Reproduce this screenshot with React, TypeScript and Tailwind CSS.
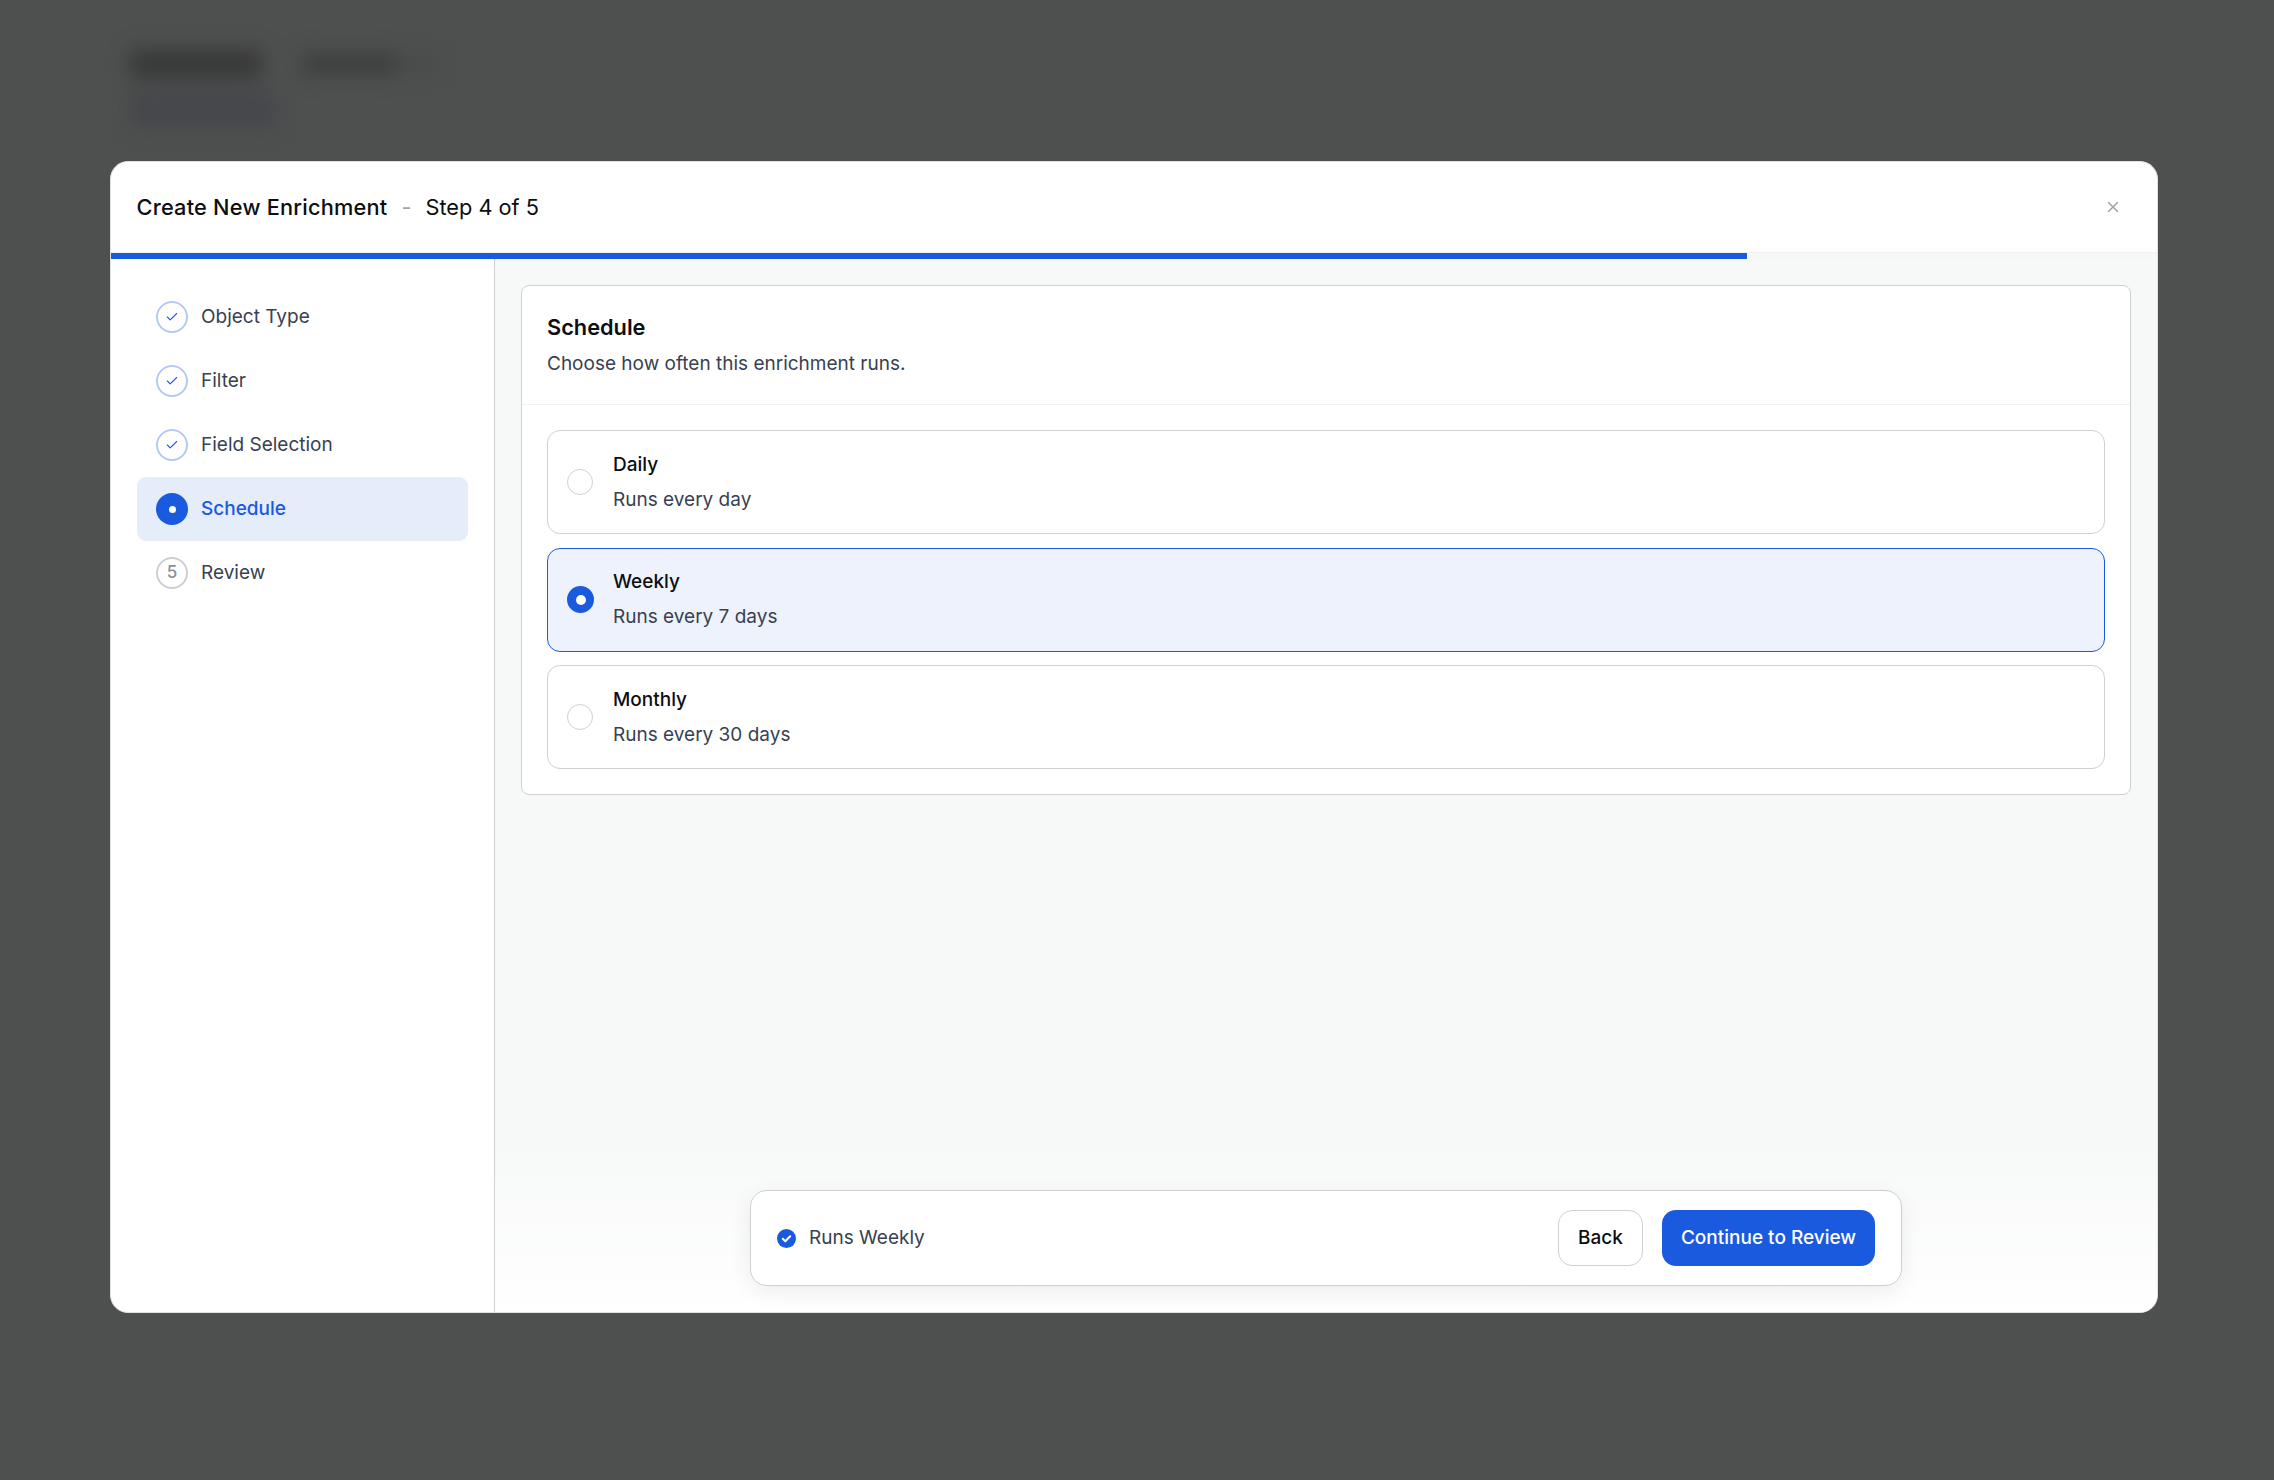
import { Check, X } from 'lucide-react';

const steps = [
  { label: 'Object Type', state: 'done' },
  { label: 'Filter', state: 'done' },
  { label: 'Field Selection', state: 'done' },
  { label: 'Schedule', state: 'active' },
  { label: 'Review', state: 'todo' },
];

const options = [
  { title: 'Daily', desc: 'Runs every day', selected: false },
  { title: 'Weekly', desc: 'Runs every 7 days', selected: true },
  { title: 'Monthly', desc: 'Runs every 30 days', selected: false },
];

function StepIcon({ state }: { state: string }) {
  if (state === 'done') {
    return (
      <span className="flex h-8 w-8 items-center justify-center rounded-full border-2 border-[#b4cbf5] bg-white">
        <Check size={14} strokeWidth={1.9} className="text-[#1a5adf]" />
      </span>
    );
  }
  if (state === 'active') {
    return (
      <span className="flex h-8 w-8 items-center justify-center rounded-full bg-[#1a5adf]">
        <span className="h-[7px] w-[7px] rounded-full bg-white" />
      </span>
    );
  }
  return (
    <span className="flex h-8 w-8 items-center justify-center rounded-full border-2 border-[#cdcfd2] bg-white text-[17px] font-medium text-[#8b9097]">
      5
    </span>
  );
}

export default function App() {
  return (
    <div className="relative h-screen w-screen overflow-hidden bg-[#4e504f] font-['Inter',sans-serif]">
      {/* page behind the dialog, blurred */}
      <div className="flex flex-col gap-[14px] pl-[130px] pt-[50px] blur-[10px]">
        <div className="flex items-center gap-[40px]">
          <div className="h-[28px] w-[132px] bg-[#373837]" />
          <div className="h-[22px] w-[96px] bg-[#3d3e3d]" />
          <div className="-ml-[36px] h-[14px] w-[34px] bg-[#484948]" />
        </div>
        <div className="h-[36px] w-[146px] bg-[#45474c]" />
      </div>

      <div className="absolute inset-0 pl-[110px] pt-[161px]">
        <div className="flex h-[1152px] w-[2048px] flex-col overflow-hidden rounded-[18px] border border-[#dfe0e0] bg-white">
          <header className="flex h-[91px] shrink-0 items-center justify-between border-b border-[#f0f1f1] pl-[25.5px] pr-[35px] text-[21.75px] text-[#0c0e12]">
            <div className="flex items-center gap-[14px]">
              <span className="font-medium tracking-[0.01em]">Create New Enrichment</span>
              <span className="text-[#9ca3af]">-</span>
              <span>Step 4 of 5</span>
            </div>
            <X size={18} strokeWidth={2} className="text-[#9ca3af]" />
          </header>

          <div className="h-[6px] w-full shrink-0 bg-[#f6f7f7]">
            <div className="h-full w-[1636px] bg-[#1a5adf]" />
          </div>

          <div className="flex min-h-0 flex-1">
            <aside className="flex w-[384px] shrink-0 flex-col border-r border-[#cfd0d2] px-[26px] pt-[26px]">
              {steps.map((step) => (
                <div
                  key={step.label}
                  className={`flex h-[64px] items-center gap-[13px] rounded-[9px] px-[19px] text-[19px] ${
                    step.state === 'active' ? 'bg-[#e5edfa] font-medium text-[#1a5adf]' : 'text-[#374151]'
                  }`}
                >
                  <StepIcon state={step.state} />
                  <span>{step.label}</span>
                </div>
              ))}
            </aside>

            <main className="relative min-w-0 flex-1 bg-[#f7f8f8] px-[26px] pt-[26px]">
              <section className="overflow-hidden rounded-[8px] border border-[#cfd0d2] bg-white">
                <div className="border-b border-[#f0f1f1] px-[25px] pb-[27px] pt-[25px]">
                  <h2 className="text-[21.75px] leading-[32px] font-semibold text-[#0c0e12]">Schedule</h2>
                  <p className="mt-[8px] text-[19px] leading-[26px] text-[#374151]">Choose how often this enrichment runs.</p>
                </div>
                <div className="flex flex-col gap-[13.5px] p-[25px]">
                  {options.map((opt) => (
                    <div
                      key={opt.title}
                      className={`flex h-[104px] items-center rounded-[13px] border pl-[19px] ${
                        opt.selected ? 'border-[#1a5adf] bg-[#edf2fc]' : 'border-[#cfd0d2] bg-white'
                      }`}
                    >
                      {opt.selected ? (
                        <span className="mr-[19px] flex h-[27px] w-[27px] shrink-0 items-center justify-center rounded-full bg-[#1a5adf]">
                          <span className="h-[10px] w-[10px] rounded-full bg-white" />
                        </span>
                      ) : (
                        <span className="mr-[20px] h-[26px] w-[26px] shrink-0 rounded-full border border-[#cfd0d2] bg-white" />
                      )}
                      <div className="flex flex-col gap-[9px]">
                        <span className="text-[19px] leading-[26px] font-[450] text-[#0c0e12]">{opt.title}</span>
                        <span className="text-[19px] leading-[26px] text-[#374151]">{opt.desc}</span>
                      </div>
                    </div>
                  ))}
                </div>
              </section>

              <div className="absolute inset-x-0 bottom-0 flex h-[174px] items-end justify-center bg-gradient-to-b from-[#f7f8f8]/0 to-white pb-[26px]">
                <div className="flex h-[96px] w-[1152px] items-center justify-between rounded-[17px] border border-[#cfd0d2] bg-white pl-[26px] pr-[26px] shadow-[0_6px_22px_rgba(0,0,0,0.07)]">
                  <div className="flex items-center gap-[13px]">
                    <svg width="19" height="19" viewBox="0 0 19 19">
                      <circle cx="9.5" cy="9.5" r="9.5" fill="#1a5adf" />
                      <path d="M5.8 9.8l2.5 2.4 4.9-4.9" fill="none" stroke="#fff" strokeWidth="2" strokeLinecap="round" strokeLinejoin="round" />
                    </svg>
                    <span className="text-[19px] text-[#374151]">Runs Weekly</span>
                  </div>
                  <div className="flex items-center gap-[19px]">
                    <button className="h-[56px] w-[85px] rounded-[14px] border border-[#cfd0d2] bg-white text-[19px] font-[450] text-[#0c0e12]">
                      Back
                    </button>
                    <button className="h-[56px] w-[213px] rounded-[14px] bg-[#1a5adf] text-[19px] font-[450] text-white">
                      Continue to Review
                    </button>
                  </div>
                </div>
              </div>
            </main>
          </div>
        </div>
      </div>
    </div>
  );
}
